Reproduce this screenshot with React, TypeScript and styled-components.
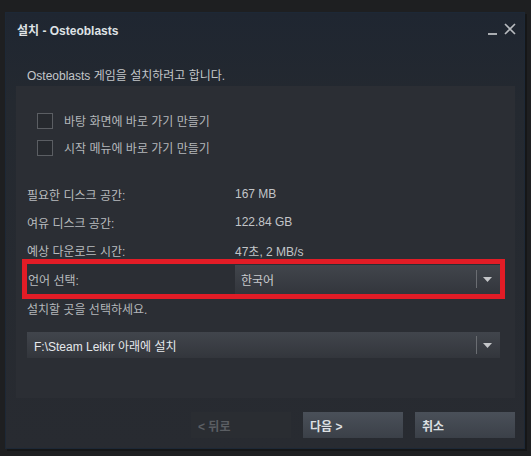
import styled, { createGlobalStyle } from 'styled-components';

const GlobalStyle = createGlobalStyle`
  * { box-sizing: border-box; }
  html, body {
    margin: 0;
    padding: 0;
    background: #1e1f21;
  }
  body {
    font-family: "Liberation Sans", "Noto Sans CJK KR", sans-serif;
    font-size: 12px;
    color: #b9bcbf;
  }
`;

const Page = styled.div`
  width: 531px;
  height: 456px;
  padding: 12px 0 0 5px;
`;

const Window = styled.div`
  width: 520px;
  height: 437px;
  border: 1px solid #1d2836;
  background: linear-gradient(180deg, #1f2631 0px, #242930 90px, #282b31 100%);
  box-shadow: 2px 2px 0 #151617;
  display: flex;
  flex-direction: column;
`;

const TitleBar = styled.div`
  height: 32px;
  display: flex;
  align-items: center;
  justify-content: space-between;
  padding: 0 8px 0 11px;
`;

const Title = styled.div`
  color: #dfe2e5;
  font-size: 12px;
  font-weight: 700;
`;

const Controls = styled.div`
  display: flex;
  align-items: center;
  gap: 7px;
`;

const Minimize = styled.span`
  width: 9px;
  height: 2px;
  margin-top: 9px;
  background: #a9acb0;
`;

const Intro = styled.div`
  margin: 23px 0 2px 21px;
  line-height: 16px;
  color: #c4c7ca;
`;

const Panel = styled.div`
  margin-left: 10px;
  width: 499px;
  height: 312px;
  background: #2b2e34;
  padding: 21px 10px 0 11px;
  display: flex;
  flex-direction: column;
`;

const CheckRow = styled.label`
  height: 27px;
  display: flex;
  align-items: center;
  gap: 11px;
  padding-left: 10px;
  color: #b4b7ba;
`;

const Box = styled.span`
  width: 16px;
  height: 16px;
  border: 1px solid #5b5e63;
  background: #26292e;
`;

const InfoList = styled.div`
  margin-top: 24px;
  display: flex;
  flex-direction: column;
  gap: 10px;
`;

const InfoRow = styled.div`
  height: 18px;
  display: grid;
  grid-template-columns: 208px 1fr;
  align-items: center;
`;

const Value = styled.span`
  color: #c2c5c8;
`;

const LanguageRow = styled.div`
  margin-left: -5px;
  width: 483px;
  height: 40px;
  border: 5px solid #e21c26;
  display: grid;
  grid-template-columns: 208px 1fr;
  align-items: center;
`;

const Label = styled.span`
  padding-left: 1px;
`;

const Hint = styled.div`
  margin-top: 3px;
  line-height: 16px;
  color: #b4b7ba;
`;

const Select = styled.div<{ $tall?: boolean; $bright?: boolean }>`
  height: ${({ $tall }) => ($tall ? '29px' : '26px')};
  display: flex;
  align-items: center;
  justify-content: space-between;
  padding: 0 8px 0 ${({ $bright }) => ($bright ? '7px' : '6px')};
  background: linear-gradient(180deg, #41454c 0%, #33363c 100%);
  color: ${({ $bright }) => ($bright ? '#e6e9ec' : '#c9cbce')};
`;

const LocationSelect = styled(Select)`
  margin-top: 14px;
  width: 473px;
`;

const Toggle = styled.span`
  display: flex;
  align-items: center;
  gap: 6px;
`;

const Divider = styled.span`
  width: 1px;
  height: 18px;
  background: #6a6d72;
`;

const Footer = styled.div`
  margin-top: 14px;
  padding-right: 9px;
  display: flex;
  justify-content: flex-end;
  gap: 12px;
`;

const Button = styled.button<{ $disabled?: boolean }>`
  width: 100px;
  height: 26px;
  border: none;
  padding: 0 7px;
  text-align: left;
  font: inherit;
  font-weight: 700;
  color: ${({ $disabled }) => ($disabled ? '#5b5e63' : '#dde0e3')};
  background: ${({ $disabled }) =>
    $disabled ? '#2a2d32' : 'linear-gradient(180deg, #4a5059 0%, #3b4048 100%)'};
`;

function Arrow() {
  return (
    <svg width="9" height="5" viewBox="0 0 9 5">
      <path d="M0 0h9L4.5 5z" fill="#c4c6c9" />
    </svg>
  );
}

function SelectToggle() {
  return (
    <Toggle>
      <Divider />
      <Arrow />
    </Toggle>
  );
}

export default function App() {
  return (
    <Page>
      <GlobalStyle />
      <Window>
        <TitleBar>
          <Title>설치 - Osteoblasts</Title>
          <Controls>
            <Minimize />
            <svg width="12" height="12" viewBox="0 0 12 12">
              <path d="M1 1l10 10M11 1L1 11" stroke="#b8bbbf" strokeWidth="1.6" />
            </svg>
          </Controls>
        </TitleBar>
        <Intro>Osteoblasts 게임을 설치하려고 합니다.</Intro>
        <Panel>
          <CheckRow>
            <Box />
            바탕 화면에 바로 가기 만들기
          </CheckRow>
          <CheckRow>
            <Box />
            시작 메뉴에 바로 가기 만들기
          </CheckRow>
          <InfoList>
            <InfoRow>
              <span>필요한 디스크 공간:</span>
              <Value>167 MB</Value>
            </InfoRow>
            <InfoRow>
              <span>여유 디스크 공간:</span>
              <Value>122.84 GB</Value>
            </InfoRow>
            <InfoRow>
              <span>예상 다운로드 시간:</span>
              <Value>47초, 2 MB/s</Value>
            </InfoRow>
          </InfoList>
          <LanguageRow>
            <Label>언어 선택:</Label>
            <Select $tall>
              <span>한국어</span>
              <SelectToggle />
            </Select>
          </LanguageRow>
          <Hint>설치할 곳을 선택하세요.</Hint>
          <LocationSelect $bright>
            <span>F:\Steam Leikir 아래에 설치</span>
            <SelectToggle />
          </LocationSelect>
        </Panel>
        <Footer>
          <Button $disabled>&lt; 뒤로</Button>
          <Button>다음 &gt;</Button>
          <Button>취소</Button>
        </Footer>
      </Window>
    </Page>
  );
}
